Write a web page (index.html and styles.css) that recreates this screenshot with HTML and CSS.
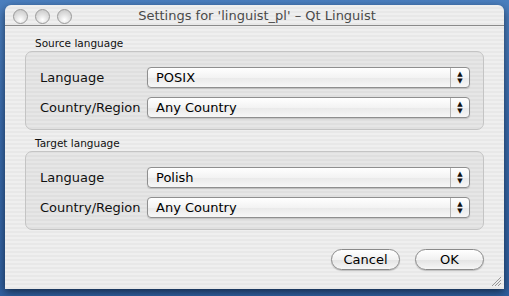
FILE: index.html
```html
<!DOCTYPE html>
<html>
  <head>
    <meta charset="UTF-8">
    <link rel="stylesheet" href="styles.css">
    <title>Settings for 'linguist_pl' – Qt Linguist</title>
  </head>
  <body>
    <div class="window">
      <div class="titlebar">
        <div class="lights">
          <span class="light"></span>
          <span class="light"></span>
          <span class="light"></span>
        </div>
        <div class="title">Settings for 'linguist_pl' – Qt Linguist</div>
      </div>
      <div class="content">
        <div class="group-label">Source language</div>
        <div class="group">
          <div class="row">
            <span class="label">Language</span>
            <div class="combo"><span class="value">POSIX</span><span class="arrows">▲<br>▼</span></div>
          </div>
          <div class="row">
            <span class="label">Country/Region</span>
            <div class="combo"><span class="value">Any Country</span><span class="arrows">▲<br>▼</span></div>
          </div>
        </div>
        <div class="group-label">Target language</div>
        <div class="group">
          <div class="row">
            <span class="label">Language</span>
            <div class="combo"><span class="value">Polish</span><span class="arrows">▲<br>▼</span></div>
          </div>
          <div class="row">
            <span class="label">Country/Region</span>
            <div class="combo"><span class="value">Any Country</span><span class="arrows">▲<br>▼</span></div>
          </div>
        </div>
        <div class="buttons">
          <button class="btn">Cancel</button>
          <button class="btn">OK</button>
        </div>
      </div>
      <svg class="grip" width="12" height="12" viewBox="0 0 12 12">
        <path d="M11 2 L2 11 M11 5 L5 11 M11 8 L8 11" stroke="#999" stroke-width="1"/>
      </svg>
    </div>
  </body>
</html>
```

FILE: styles.css
```css
body {
  margin: 0;
  width: 509px;
  height: 296px;
  padding: 5px 5px 0 5px;
  box-sizing: border-box;
  background: linear-gradient(180deg, #4b7fbf 0%, #3a6cae 40%, #2f5f9f 100%);
  font-family: "DejaVu Sans", sans-serif;
  overflow: hidden;
}

.window {
  position: relative;
  width: 499px;
  height: 284px;
  border-radius: 6px 6px 0 0;
  background: repeating-linear-gradient(180deg, #efefef 0px, #efefef 2px, #e8e8e8 2px, #e8e8e8 4px);
  box-shadow: 0 3px 8px rgba(0, 0, 0, 0.55);
  display: flex;
  flex-direction: column;
}

.titlebar {
  height: 20px;
  border-bottom: 1px solid #8a8a8a;
  display: flex;
  align-items: center;
  position: relative;
}

.lights {
  display: flex;
  gap: 7px;
  padding-left: 8px;
  padding-top: 2px;
}

.light {
  width: 13px;
  height: 13px;
  border-radius: 50%;
  border: 1px solid #9a9a9a;
  background: radial-gradient(circle at 50% 75%, #ffffff 0%, #e2e2e2 45%, #c2c2c2 100%);
  box-sizing: content-box;
}

.title {
  flex: 1;
  text-align: center;
  font-size: 13px;
  color: #4a4a4a;
  padding-right: 62px;
  padding-top: 1px;
}

.content {
  padding: 10px 20px 0 20px;
  display: flex;
  flex-direction: column;
}

.group-label {
  font-size: 10.5px;
  color: #111;
  padding-left: 10px;
  height: 14px;
  line-height: 14px;
}

.group {
  margin-top: 1px;
  margin-bottom: 6px;
  height: 79px;
  border: 1px solid #c4c4c4;
  border-radius: 7px;
  background: rgba(0, 0, 0, 0.035);
  box-sizing: border-box;
  padding: 15px 13px 0 14px;
  display: flex;
  flex-direction: column;
  gap: 9px;
}

.row {
  display: flex;
  align-items: center;
  height: 21px;
}

.label {
  width: 107px;
  font-size: 13px;
  color: #111;
}

.combo {
  flex: 1;
  height: 21px;
  box-sizing: border-box;
  border: 1px solid #8f8f8f;
  border-radius: 4px;
  background: linear-gradient(180deg, #ffffff 0%, #f3f3f3 50%, #e9e9e9 51%, #f7f7f7 100%);
  box-shadow: 0 1px 1px rgba(0, 0, 0, 0.15);
  display: flex;
  align-items: center;
}

.value {
  flex: 1;
  padding-left: 8px;
  font-size: 13px;
  color: #000;
}

.arrows {
  width: 18px;
  height: 100%;
  border-left: 1px solid #b5b5b5;
  font-size: 7px;
  line-height: 7px;
  text-align: center;
  color: #111;
  display: flex;
  flex-direction: column;
  justify-content: center;
}

.buttons {
  display: flex;
  justify-content: flex-end;
  gap: 15px;
  margin-top: 13px;
}

.btn {
  width: 69px;
  height: 21px;
  border: 1px solid #8a8a8a;
  border-radius: 11px;
  background: linear-gradient(180deg, #ffffff 0%, #f1f1f1 50%, #e3e3e3 51%, #f6f6f6 100%);
  box-shadow: 0 1px 1px rgba(0, 0, 0, 0.2);
  font-family: "DejaVu Sans", sans-serif;
  font-size: 13px;
  color: #000;
  padding: 0;
}

.grip {
  position: absolute;
  right: 2px;
  bottom: 2px;
}
```
